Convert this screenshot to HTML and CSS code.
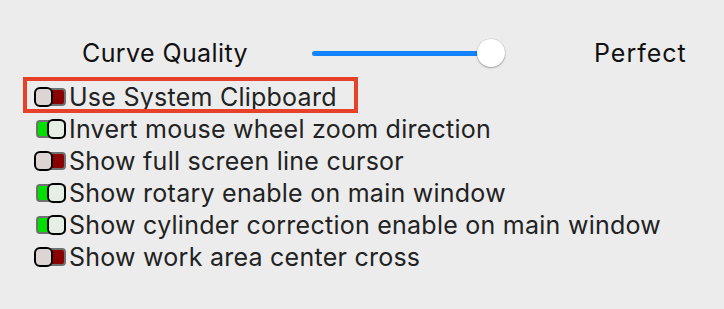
FILE: index.html
```html
<!DOCTYPE html>
<html lang="en">

<head>
    <meta charset="UTF-8">
    <meta name="viewport" content="width=device-width, initial-scale=1.0">
    <title>Preferences</title>
    <link rel="stylesheet" href="styles.css">
</head>

<body>
    <!-- 곡선 품질 슬라이더 -->
    <div class="quality">
        <span class="qlabel">Curve Quality</span>
        <div class="slider">
            <div class="track"></div>
            <div class="knob"></div>
        </div>
        <span class="qvalue">Perfect</span>
    </div>

    <!-- 옵션 목록 -->
    <ul class="opts">
        <li class="mark"></li>
        <li><span class="tog off"><i></i></span>Use System Clipboard</li>
        <li><span class="tog on"><i></i></span>Invert mouse wheel zoom direction</li>
        <li><span class="tog off"><i></i></span>Show full screen line cursor</li>
        <li><span class="tog on"><i></i></span>Show rotary enable on main window</li>
        <li><span class="tog on"><i></i></span>Show cylinder correction enable on main window</li>
        <li><span class="tog off"><i></i></span>Show work area center cross</li>
    </ul>
</body>

</html>
```

FILE: styles.css
```css
html,
body {
    margin: 0;
    padding: 0;
}

body {
    width: 724px;
    height: 309px;
    background: #ececec;
    font-family: Inter, "Liberation Sans", sans-serif;
    font-size: 25px;
    letter-spacing: 0.25px;
    color: #222;
    overflow: hidden;
}

/* 슬라이더 줄 */
.quality {
    display: flex;
    align-items: center;
    height: 30px;
    margin-top: 38px;
    padding-left: 82px;
    color: #111;
}

.qlabel {
    width: 230px;
    letter-spacing: 0.4px;
}

.slider {
    position: relative;
    width: 193px;
    height: 30px;
}

.track {
    position: absolute;
    left: 0;
    right: 12px;
    top: 13px;
    height: 5px;
    border-radius: 3px;
    background: #1383fb;
}

/* 슬라이더 손잡이 */
.knob {
    position: absolute;
    right: 0;
    top: 1px;
    width: 28px;
    height: 28px;
    border-radius: 50%;
    background: #fff;
    box-shadow: 0 0 0 0.5px rgba(0, 0, 0, 0.12), 0 1px 2px rgba(0, 0, 0, 0.3);
}

.qvalue {
    margin-left: 89px;
    letter-spacing: 1px;
}

/* 옵션 목록 */
.opts {
    position: relative;
    list-style: none;
    margin: 0;
    padding: 13px 0 0 34px;
}

.opts li {
    display: flex;
    align-items: center;
    height: 32px;
}

/* 빨간 강조 박스 */
.opts li.mark {
    position: absolute;
    left: 23px;
    top: 9px;
    width: 327px;
    height: 28px;
    border: 4px solid #e8412a;
}

/* 토글 */
.tog {
    position: relative;
    flex: none;
    width: 32px;
    height: 20px;
    margin-right: 3px;
}

.tog::before {
    content: "";
    position: absolute;
    left: 2px;
    right: 0;
    top: 1px;
    bottom: 1px;
    border: 2px solid #707070;
    border-radius: 4px;
}

.tog i {
    position: absolute;
    top: 0;
    width: 15px;
    height: 16px;
    border: 2px solid #000;
    border-radius: 6px;
}

.tog.off::before {
    background: #8b0000;
}

.tog.off i {
    left: 0;
    background: #ddd4d4;
}

.tog.on::before {
    background: #00e000;
}

.tog.on i {
    right: 0;
    background: #e6efe6;
}
```
